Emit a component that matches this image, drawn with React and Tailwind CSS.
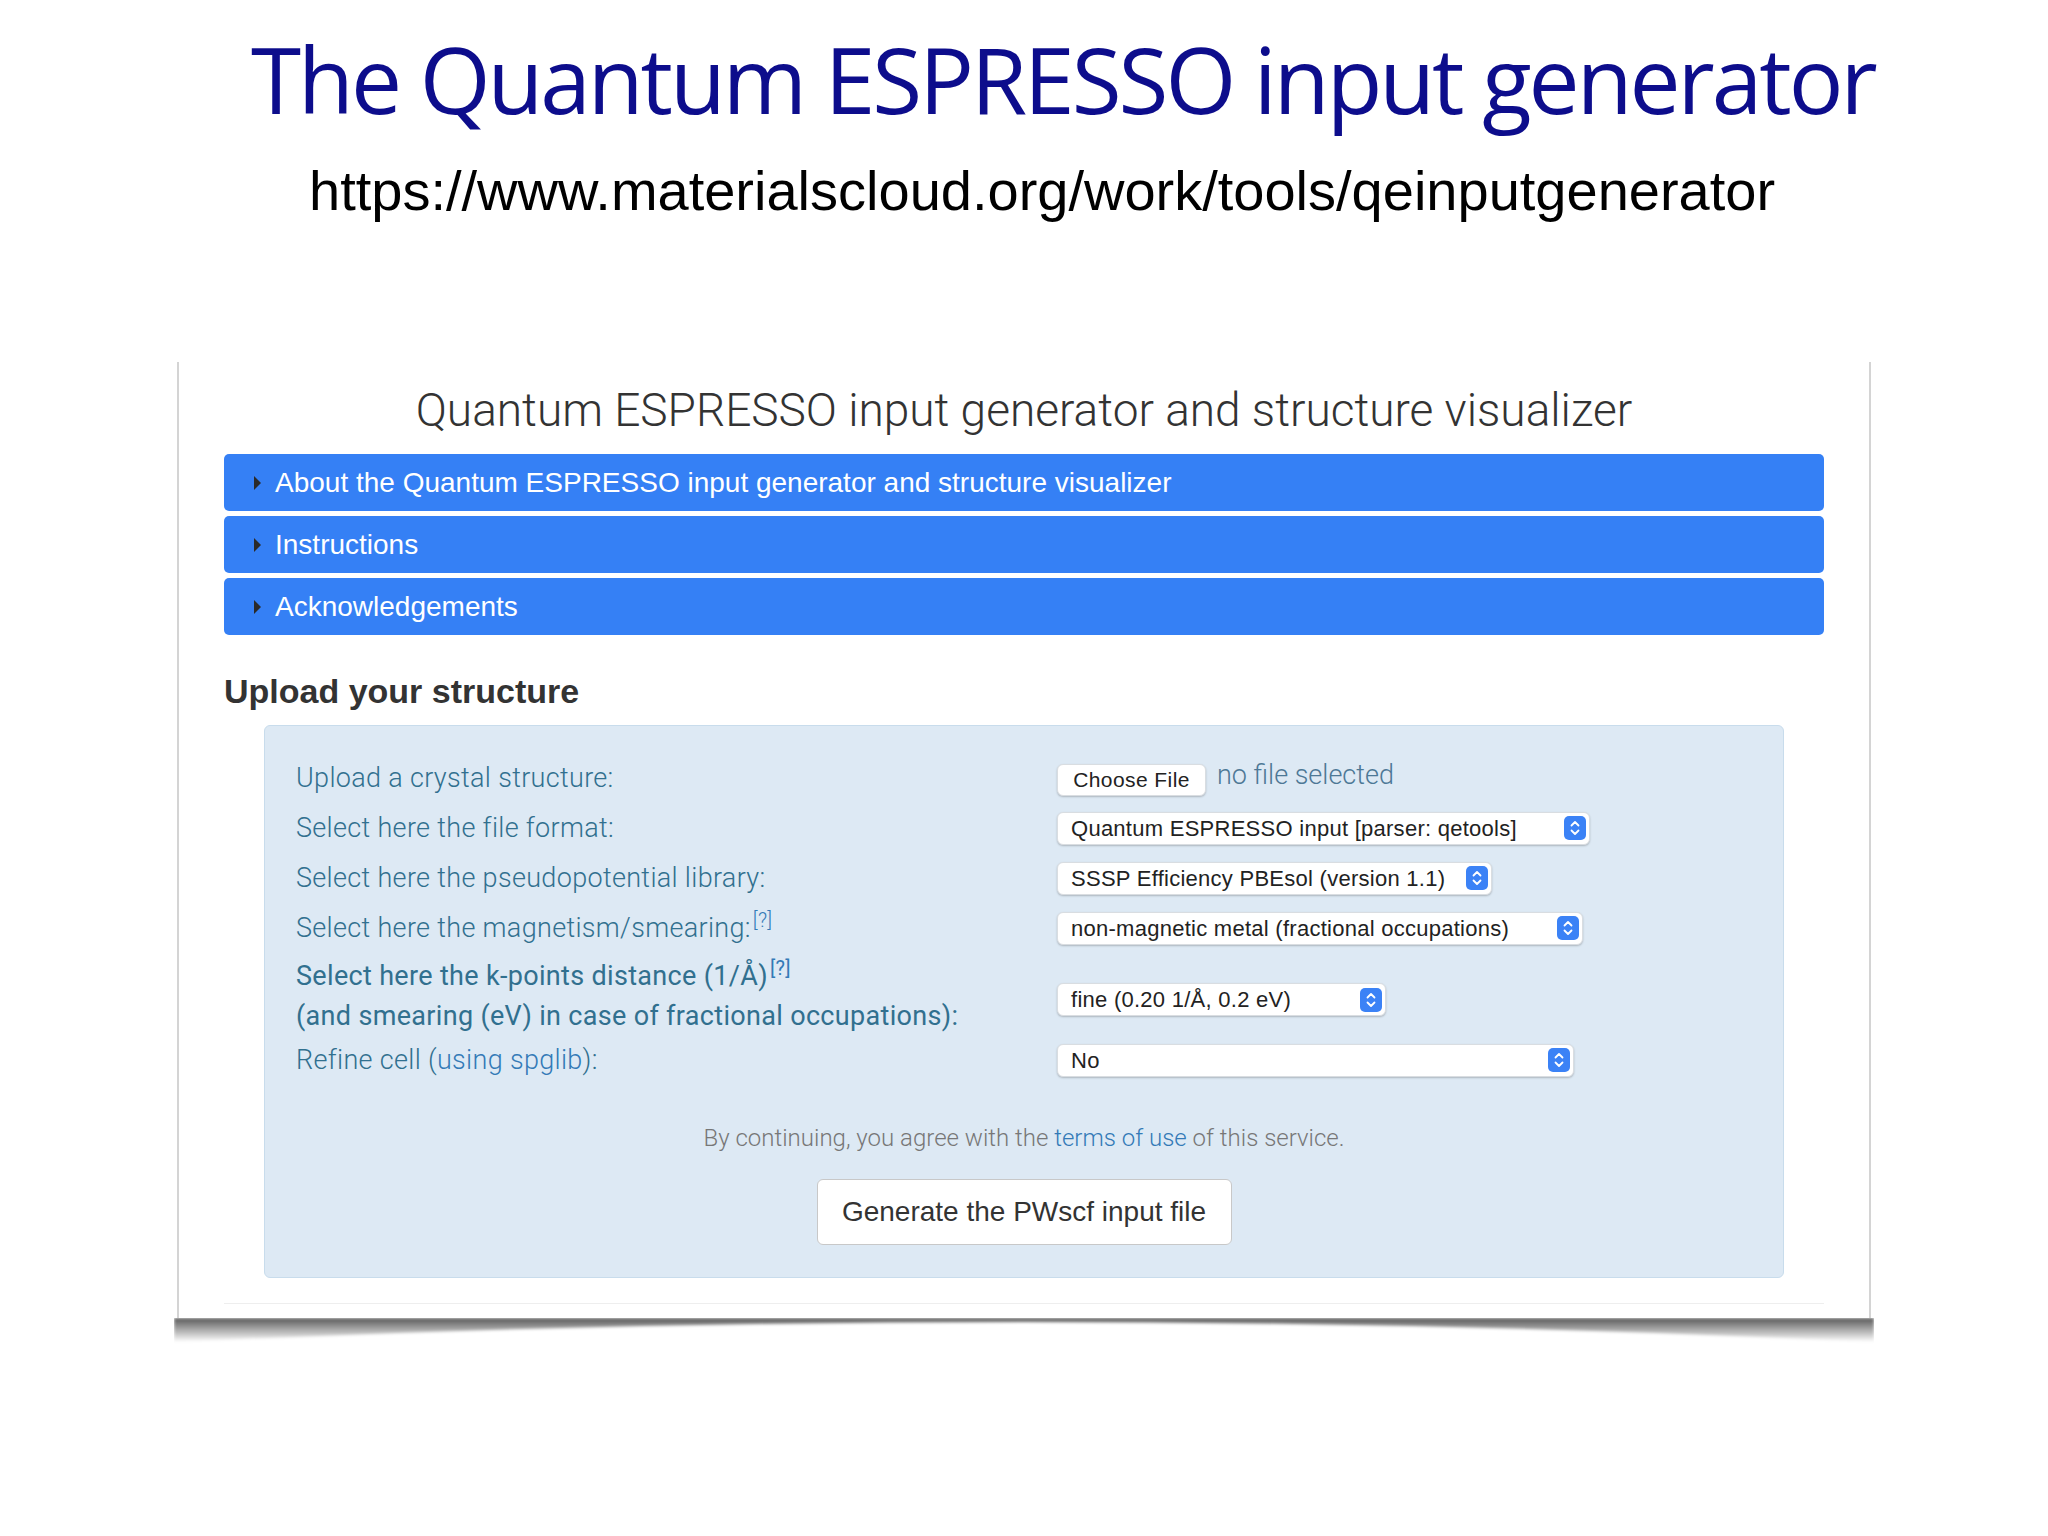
import React from 'react'

const LABEL = "font-['Roboto','Liberation_Sans',sans-serif] font-light text-[27px] tracking-[0.012em] text-[#31708f]"

function Stepper() {
  return (
    <svg width="22" height="24" viewBox="0 0 22 24" className="shrink-0">
      <rect x="0" y="0" width="22" height="24" rx="5" fill="#3b82f6" />
      <path d="M7.5 9.5 L11 6 L14.5 9.5" fill="none" stroke="#fff" strokeWidth="1.8" strokeLinecap="round" strokeLinejoin="round" />
      <path d="M7.5 14.5 L11 18 L14.5 14.5" fill="none" stroke="#fff" strokeWidth="1.8" strokeLinecap="round" strokeLinejoin="round" />
    </svg>
  )
}

function Select({ text, width }) {
  return (
    <div
      className="h-[33px] flex items-center justify-between pl-[13px] pr-[3px] bg-white rounded-[6px] border border-[#d9dde1] shadow-[0_1px_2px_rgba(0,0,0,0.22)]"
      style={{ width }}
    >
      <span className="font-['Liberation_Sans',sans-serif] text-[22px] text-[#222] tracking-[0.012em] whitespace-nowrap">{text}</span>
      <Stepper />
    </div>
  )
}

function Bar({ children }) {
  return (
    <div className="h-[57px] flex items-center bg-[#3580f5] rounded-[5px] pl-[30px]">
      <span className="w-0 h-0 border-y-[7px] border-y-transparent border-l-[7px] border-l-[#2a2a2a] mr-[14px]" />
      <span className="font-['Liberation_Sans',sans-serif] text-[28px] text-white whitespace-nowrap">{children}</span>
    </div>
  )
}

function Help() {
  return <sup className="text-[20px] text-[#337ab7] ml-[2px] -top-[10px]">[?]</sup>
}

export default function App() {
  return (
    <div className="w-[2048px] h-[1536px] bg-white overflow-hidden">
      <h1 className="pl-[251px] pt-[34px] font-['Open_Sans',sans-serif] text-[91px] leading-none text-[#0d0d8c] tracking-[-0.033em] whitespace-nowrap">
        The Quantum ESPRESSO input generator
      </h1>
      <p className="pl-[309px] mt-[38px] font-['Liberation_Sans',sans-serif] text-[56px] leading-none text-black whitespace-nowrap">
        https://www.materialscloud.org/work/tools/qeinputgenerator
      </p>

      <div className="ml-[177px] mt-[143px] w-[1694px] bg-white border-x-[2px] border-[#d4d4d4] pt-[18px] pb-[14px] px-[45px]">
        <div className="h-[60px] flex items-center justify-center font-['Roboto','Liberation_Sans',sans-serif] font-light text-[46px] text-[#333] whitespace-nowrap">
          Quantum ESPRESSO input generator and structure visualizer
        </div>

        <div className="mt-[14px] flex flex-col gap-[5px]">
          <Bar>About the Quantum ESPRESSO input generator and structure visualizer</Bar>
          <Bar>Instructions</Bar>
          <Bar>Acknowledgements</Bar>
        </div>

        <h2 className="mt-[34px] h-[44px] flex items-center font-['Liberation_Sans',sans-serif] font-bold text-[34px] text-[#333]">
          Upload your structure
        </h2>

        <div className="mt-[12px] mx-[40px] bg-[#dde9f4] border border-[#c8dcec] rounded-[6px] pt-[27px] pb-[32px] pl-[31px]">
          <div className="h-[50px] flex items-center">
            <div className={`w-[761px] ${LABEL}`}>Upload a crystal structure:</div>
            <div className="flex items-center pt-[3px]">
              <div className="h-[32px] w-[149px] flex items-center justify-center bg-white rounded-[6px] border border-[#d9dde1] shadow-[0_1px_2px_rgba(0,0,0,0.22)] font-['Liberation_Sans',sans-serif] text-[21px] text-[#222] tracking-[0.02em]">
                Choose File
              </div>
              <span className="ml-[11px] -mt-[8px] font-['Roboto','Liberation_Sans',sans-serif] font-light text-[27px] text-[#4d7896]">no file selected</span>
            </div>
          </div>

          <div className="h-[50px] flex items-center">
            <div className={`w-[761px] ${LABEL}`}>Select here the file format:</div>
            <Select text="Quantum ESPRESSO input [parser: qetools]" width={533} />
          </div>

          <div className="h-[50px] flex items-center">
            <div className={`w-[761px] ${LABEL}`}>Select here the pseudopotential library:</div>
            <Select text="SSSP Efficiency PBEsol (version 1.1)" width={435} />
          </div>

          <div className="h-[50px] flex items-center">
            <div className={`w-[761px] ${LABEL}`}>
              Select here the magnetism/smearing:<Help />
            </div>
            <Select text="non-magnetic metal (fractional occupations)" width={526} />
          </div>

          <div className="h-[85px] flex items-center">
            <div className="w-[761px] font-['Roboto','Liberation_Sans',sans-serif] font-normal text-[27px] tracking-[0.012em] leading-[40px] text-[#31708f]">
              <div>Select here the k-points distance (1/Å)<Help /></div>
              <div>(and smearing (eV) in case of fractional occupations):</div>
            </div>
            <div className="pt-[8px]">
              <Select text="fine (0.20 1/Å, 0.2 eV)" width={329} />
            </div>
          </div>

          <div className="h-[44px] flex items-center">
            <div className={`w-[761px] ${LABEL}`}>
              Refine cell (<span className="text-[#337ab7]">using spglib</span>):
            </div>
            <Select text="No" width={517} />
          </div>

          <div className="mt-[41px] pr-[31px] text-center font-['Roboto','Liberation_Sans',sans-serif] font-light text-[24px] leading-[30px] text-[#777]">
            By continuing, you agree with the <span className="text-[#337ab7]">terms of use</span> of this service.
          </div>

          <div className="mt-[26px] pr-[31px] flex justify-center">
            <div className="w-[415px] h-[66px] flex items-center justify-center bg-white border border-[#c8c8c8] rounded-[6px] font-['Liberation_Sans',sans-serif] text-[28px] text-[#333]">
              Generate the PWscf input file
            </div>
          </div>
        </div>

        <div className="mt-[25px] h-px bg-[#eeeeee]" />
      </div>

      <svg width="1700" height="26" viewBox="0 0 1700 26" className="ml-[174px] block">
        <defs>
          <linearGradient id="curlShadow" x1="0" y1="0" x2="0" y2="1">
            <stop offset="0%" stopColor="#000" stopOpacity="0.65" />
            <stop offset="100%" stopColor="#000" stopOpacity="0" />
          </linearGradient>
          <filter id="soft" x="-5%" y="-50%" width="110%" height="200%">
            <feGaussianBlur stdDeviation="1.5" />
          </filter>
        </defs>
        <path d="M0 0 H1700 V24 Q850 -16 0 24 Z" fill="url(#curlShadow)" filter="url(#soft)" />
      </svg>
    </div>
  )
}
